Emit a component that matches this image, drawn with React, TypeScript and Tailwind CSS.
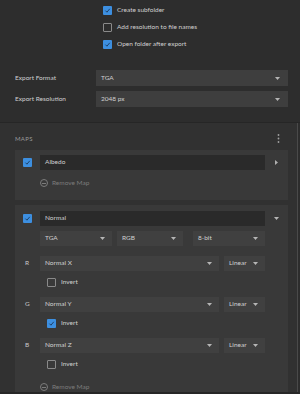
import React from "react";

const Check = ({ on }: { on: boolean }) =>
  on ? (
    <div className="w-[9px] h-[9px] bg-[#3d8fe0] rounded-[1px] flex items-center justify-center shrink-0">
      <svg width="7" height="7" viewBox="0 0 10 10">
        <path d="M2 5.2 L4.2 7.4 L8.2 2.6" stroke="#1d3f66" strokeWidth="1.4" fill="none" />
      </svg>
    </div>
  ) : (
    <div className="w-[9px] h-[9px] border border-[#8a8a8a] rounded-[1px] shrink-0" />
  );

const Down = ({ c = "#b5b5b5" }: { c?: string }) => (
  <svg width="5" height="3" viewBox="0 0 5 3">
    <path d="M0 0 L5 0 L2.5 3 Z" fill={c} />
  </svg>
);

const Drop = ({ text, w }: { text: string; w: number }) => (
  <div
    className="h-[15px] bg-[#404040] flex items-center justify-between pl-[5px] pr-[7px] shrink-0"
    style={{ width: w }}
  >
    <span>{text}</span>
    <Down />
  </div>
);

const RemoveMap = () => (
  <div className="flex items-center gap-[4px] text-[#7c7c7c] h-[10px]">
    <div className="w-[8px] h-[8px] rounded-full border border-[#7c7c7c] flex items-center justify-center">
      <div className="w-[4px] h-[1px] bg-[#7c7c7c]" />
    </div>
    <span>Remove Map</span>
  </div>
);

const Channel = ({ l, v, inv }: { l: string; v: string; inv: boolean }) => (
  <div className="flex flex-col">
    <div className="flex items-center h-[15px]">
      <div className="w-[25px] pl-[10px] text-[#c8c8c8]">{l}</div>
      <Drop text={v} w={179} />
      <div className="w-[5px]" />
      <Drop text="Linear" w={41} />
    </div>
    <div className="flex items-center gap-[5px] pl-[32px] mt-[7px] h-[8px]">
      <Check on={inv} />
      <span>Invert</span>
    </div>
  </div>
);

export default function App() {
  return (
    <div
      className="w-[300px] h-[394px] bg-[#2d2d2d] overflow-hidden text-[6.5px] text-[#d0d0d0] leading-none flex flex-col"
      style={{ fontFamily: 'Lato, "Open Sans", sans-serif' }}
    >
      <div className="flex flex-col h-[123px] pt-[6px]">
        <div className="flex flex-col gap-[8px] pl-[103px]">
          <div className="flex items-center gap-[5px] h-[9px]">
            <Check on={true} />
            <span>Create subfolder</span>
          </div>
          <div className="flex items-center gap-[5px] h-[9px]">
            <Check on={false} />
            <span>Add resolution to file names</span>
          </div>
          <div className="flex items-center gap-[5px] h-[9px]">
            <Check on={true} />
            <span>Open folder after export</span>
          </div>
        </div>
        <div className="flex flex-col gap-[5px] mt-[21px] pl-[15px]">
          <div className="flex items-center h-[16px]">
            <div className="w-[81px]">Export Format</div>
            <div className="w-[192px] h-[16px] bg-[#3e3e3e] flex items-center justify-between pl-[5px] pr-[8px]">
              <span>TGA</span>
              <Down />
            </div>
          </div>
          <div className="flex items-center h-[16px]">
            <div className="w-[81px]">Export Resolution</div>
            <div className="w-[192px] h-[16px] bg-[#3e3e3e] flex items-center justify-between pl-[5px] pr-[8px]">
              <span>2048 px</span>
              <Down />
            </div>
          </div>
        </div>
      </div>
      <div className="flex-1 flex border-t border-[#262626] border-b-2 border-b-[#272727]">
        <div className="w-[297px] bg-[#313131] flex flex-col pl-[15px] pr-[9px]">
          <div className="flex items-center justify-between h-[27px] pt-[4px]">
            <span className="text-[6px] text-[#9a9a9a] tracking-[0.3px]">MAPS</span>
            <svg width="3" height="9" viewBox="0 0 3 9" className="mr-[8px]">
              <circle cx="1.5" cy="1" r="0.9" fill="#a0a0a0" />
              <circle cx="1.5" cy="4.5" r="0.9" fill="#a0a0a0" />
              <circle cx="1.5" cy="8" r="0.9" fill="#a0a0a0" />
            </svg>
          </div>
          <div className="bg-[#393939] h-[50px] flex flex-col pt-[5px]">
            <div className="flex items-center h-[15px]">
              <div className="w-[25px] pl-[8px]">
                <Check on={true} />
              </div>
              <div className="w-[225px] h-[15px] bg-[#2a2a2a] flex items-center pl-[5px]">Albedo</div>
              <div className="flex-1 flex justify-center">
                <svg width="3" height="5" viewBox="0 0 3 5">
                  <path d="M0 0 L3 2.5 L0 5 Z" fill="#b0b0b0" />
                </svg>
              </div>
            </div>
            <div className="pl-[25px] mt-[8px]">
              <RemoveMap />
            </div>
          </div>
          <div className="bg-[#393939] mt-[5px] flex-1 flex flex-col pt-[6px]">
            <div className="flex items-center h-[15px]">
              <div className="w-[25px] pl-[8px]">
                <Check on={true} />
              </div>
              <div className="w-[225px] h-[15px] bg-[#2a2a2a] flex items-center pl-[5px]">Normal</div>
              <div className="flex-1 flex justify-center">
                <Down />
              </div>
            </div>
            <div className="flex items-center h-[15px] mt-[5px] pl-[25px]">
              <Drop text="TGA" w={72} />
              <div className="w-[5px]" />
              <Drop text="RGB" w={66} />
              <div className="w-[10px]" />
              <Drop text="8-bit" w={72} />
            </div>
            <div className="flex flex-col gap-[11px] mt-[10px]">
              <Channel l="R" v="Normal X" inv={false} />
              <Channel l="G" v="Normal Y" inv={true} />
              <Channel l="B" v="Normal Z" inv={false} />
            </div>
            <div className="pl-[25px] mt-[14px]">
              <RemoveMap />
            </div>
          </div>
        </div>
        <div className="w-[1px] bg-[#4a4a4a]" />
        <div className="flex-1 bg-[#2d2d2d]" />
      </div>
    </div>
  );
}
